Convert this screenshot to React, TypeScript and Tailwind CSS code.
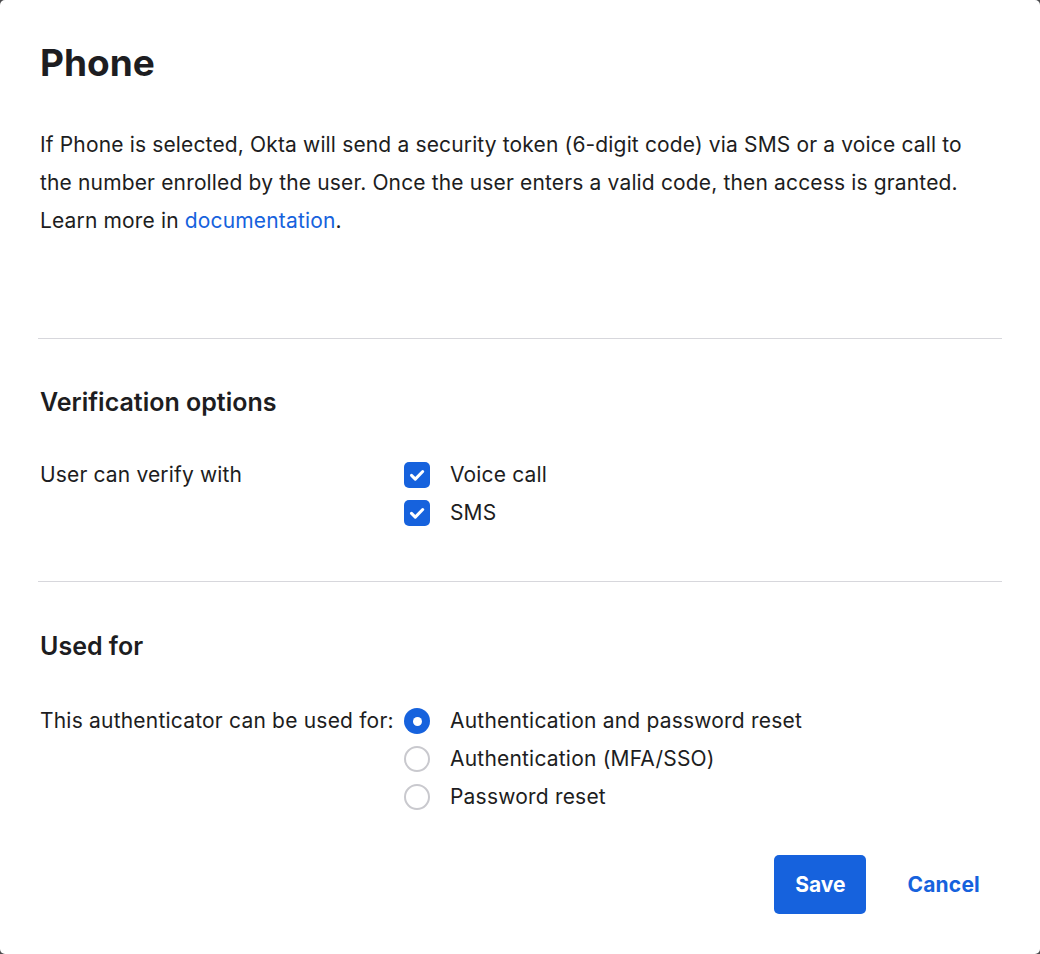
import React from "react";

const Check = () => (
  <span className="flex h-[26px] w-[26px] items-center justify-center rounded-[5px] bg-[#1662dd]">
    <svg width="26" height="26" viewBox="0 0 26 26" fill="none">
      <path d="M7.5 13.4l3.8 3.7 7.4-7.6" stroke="#fff" strokeWidth="3" strokeLinecap="round" strokeLinejoin="round" />
    </svg>
  </span>
);

const Radio = ({ on }: { on?: boolean }) =>
  on ? (
    <span className="flex h-[26px] w-[26px] items-center justify-center rounded-full bg-[#1662dd]">
      <span className="h-[9px] w-[9px] rounded-full bg-white" />
    </span>
  ) : (
    <span className="h-[26px] w-[26px] rounded-full border-2 border-[#c9c9ce] bg-white" />
  );

export default function App() {
  return (
    <div className="min-h-screen bg-[#4b4b4d]" style={{ fontFamily: "Inter, 'Noto Sans', sans-serif" }}>
      <div className="flex h-[954px] w-[1040px] flex-col rounded-[5px] bg-white pl-[40px] pr-[38px] pt-[41px] text-[#1d1d21]">
        <h1 className="text-[37px] font-bold leading-[44px]">Phone</h1>
        <p className="mt-[41px] text-[21px] leading-[38px] tracking-[0.15px]">
          If Phone is selected, Okta will send a security token (6-digit code) via SMS or a voice call to
          <br />
          the number enrolled by the user. Once the user enters a valid code, then access is granted.
          <br />
          Learn more in <a className="text-[#1662dd]">documentation</a>.
        </p>
        <div className="-ml-[2px] mt-[98px] h-px bg-[#d7d7dc]" />
        <h2 className="mt-[47px] text-[25px] font-semibold leading-[32px]">Verification options</h2>
        <div className="mt-[38px] grid grid-cols-[364px_1fr] text-[21px] tracking-[0.15px]">
          <div className="leading-[38px]">User can verify with</div>
          <div className="flex flex-col">
            {["Voice call", "SMS"].map((t) => (
              <label key={t} className="flex h-[38px] items-center gap-[20px]">
                <Check />
                <span>{t}</span>
              </label>
            ))}
          </div>
        </div>
        <div className="-ml-[2px] mt-[49px] h-px bg-[#d7d7dc]" />
        <h2 className="mt-[48px] text-[25px] font-semibold leading-[32px]">Used for</h2>
        <div className="mt-[40px] grid grid-cols-[364px_1fr] text-[21px] tracking-[0.2px]">
          <div className="leading-[38px]">This authenticator can be used for:</div>
          <div className="flex flex-col">
            {[
              ["Authentication and password reset", true],
              ["Authentication (MFA/SSO)", false],
              ["Password reset", false],
            ].map(([t, on]) => (
              <label key={t as string} className="flex h-[38px] items-center gap-[20px]">
                <Radio on={on as boolean} />
                <span>{t as string}</span>
              </label>
            ))}
          </div>
        </div>
        <div className="mt-[39px] flex items-center justify-end">
          <button className="h-[59px] w-[92px] rounded-[5px] bg-[#1662dd] text-[21px] font-bold text-white">Save</button>
          <button className="ml-[41px] mr-[22px] text-[21px] font-bold tracking-[0.2px] text-[#1662dd]">Cancel</button>
        </div>
      </div>
    </div>
  );
}
